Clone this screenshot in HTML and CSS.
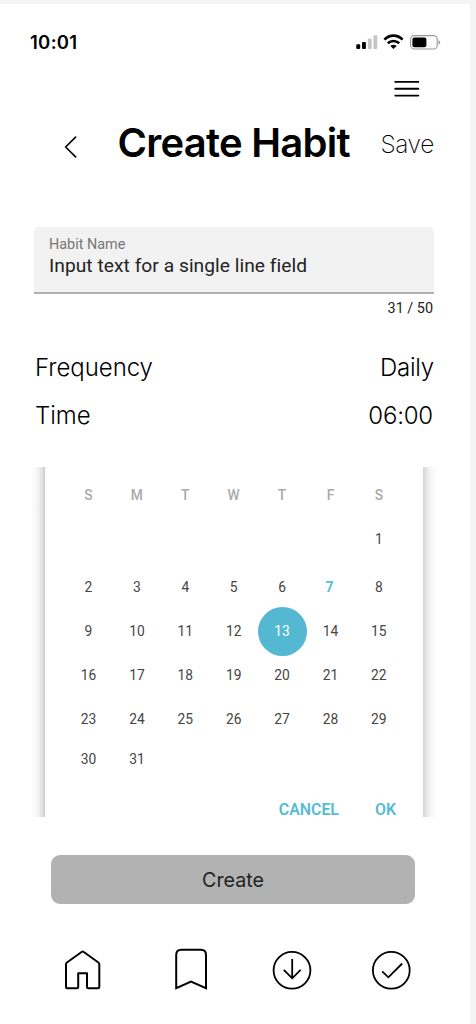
FILE: index.html
```html
<!DOCTYPE html>
<html lang="en">
<head>
<meta charset="utf-8">
<title>Create Habit</title>
<link rel="stylesheet" href="styles.css">
</head>
<body>
<main class="screen">
  <div class="status">
    <span class="clock">10:01</span>
    <svg class="status-icons" width="86" height="18" viewBox="355 33 86 18">
      <rect x="356.3" y="44.3" width="3.9" height="4.8" rx="1"/>
      <rect x="362" y="42" width="3.9" height="7.1" rx="1"/>
      <rect x="367.8" y="38.6" width="3.9" height="10.5" rx="1" fill="#c5c5c9"/>
      <rect x="373.4" y="35.3" width="3.9" height="13.8" rx="1" fill="#c5c5c9"/>
      <g fill="none" stroke="#000" stroke-width="2.7">
        <path d="M384.4 39.6C389.6 34.4 397.4 34.4 402.6 39.6"/>
        <path d="M387.8 43.3C391 40.2 396 40.2 399.2 43.3"/>
      </g>
      <path d="M390.3 46C392.1 44.2 394.9 44.2 396.7 46L393.5 49Z"/>
      <rect x="410.6" y="35.6" width="26.6" height="13.4" rx="3.6" fill="none" stroke="#999" stroke-width="1.1"/>
      <rect x="412.4" y="37.4" width="14" height="9.8" rx="2"/>
      <path d="M438.5 40.2Q440.2 40.8 440.2 42.4T438.5 44.6Z" fill="#999"/>
    </svg>
  </div>
  <div class="menu-row">
    <svg width="26" height="20" viewBox="0 0 26 20" stroke="#000" stroke-width="1.9" stroke-linecap="round"><path d="M1.3 3.9H24.3M1.3 10.8H24.3M1.3 17.6H24.3"/></svg>
  </div>
  <header class="title-row">
    <svg class="back" width="14" height="24" viewBox="0 0 14 24" fill="none" stroke="#000" stroke-width="1.7" stroke-linecap="round" stroke-linejoin="round"><path d="M12.6 2.2L2.6 12L12.6 21.8"/></svg>
    <h1 class="title">Create Habit</h1>
    <span class="save">Save</span>
  </header>
  <section class="field">
    <span class="field-label">Habit Name</span>
    <span class="field-value">Input text for a single line field</span>
  </section>
  <div class="counter">31 / 50</div>
  <div class="setting frequency"><span>Frequency</span><span class="daily">Daily</span></div>
  <div class="setting"><span>Time</span><span class="time-value">06:00</span></div>
  <section class="calendar">
    <div class="days">
      <b>S</b><b>M</b><b>T</b><b>W</b><b>T</b><b>F</b><b>S</b>
      <span class="first">1</span>
      <span>2</span><span>3</span><span>4</span><span>5</span><span>6</span><span class="today">7</span><span>8</span>
      <span>9</span><span>10</span><span>11</span><span>12</span><span class="selected">13</span><span>14</span><span>15</span>
      <span>16</span><span>17</span><span>18</span><span>19</span><span>20</span><span>21</span><span>22</span>
      <span>23</span><span>24</span><span>25</span><span>26</span><span>27</span><span>28</span><span>29</span>
      <span>30</span><span>31</span>
    </div>
    <div class="actions"><span>CANCEL</span><span>OK</span></div>
  </section>
  <button class="create">Create</button>
  <nav class="nav">
    <svg width="38" height="44" viewBox="64 948 38 44" fill="none" stroke="#000" stroke-width="2" stroke-linejoin="round"><path d="M67.2 988.2H76.7Q78.2 988.2 78.2 986.7V973.2H87V986.7Q87 988.2 88.5 988.2H98Q99.3 988.2 99.3 986.9V964.2Q99.3 963.2 98.4 962.5L83.8 952Q82.7 951.2 81.6 952L66.9 962.5Q66 963.2 66 964.2V986.9Q66 988.2 67.2 988.2Z"/></svg>
    <svg class="bookmark" width="34" height="44" viewBox="174 948 34 44" fill="none" stroke="#000" stroke-width="2"><path d="M176.2 988.2V955Q176.2 949.8 181.4 949.8H200.8Q206 949.8 206 955V988.2L191 981.5Z"/></svg>
    <svg class="download" width="40" height="44" viewBox="272 948 40 44" fill="none" stroke="#000" stroke-width="1.8"><circle cx="292" cy="970.3" r="18.4"/><path d="M292.2 959V978.5M283.8 969.8L292.2 978.3L300.6 969.8"/></svg>
    <svg class="done" width="40" height="44" viewBox="371 948 40 44" fill="none" stroke="#000" stroke-width="1.8"><circle cx="391.3" cy="970.3" r="18.4"/><path d="M382.2 971.3L388.4 977.3L402.2 963.5"/></svg>
  </nav>
</main>
</body>
</html>
```
FILE: styles.css
```css
* { box-sizing: border-box; }
body { margin: 0; background: #f4f4f4; font-family: Inter, sans-serif; color: #000; }
.screen { width: 470px; height: 1020px; margin-top: 4px; background: #fff; overflow: hidden; display: flex; flex-direction: column; }
.status { height: 53px; padding: 23px 35px 0 30px; display: flex; justify-content: space-between; }
.clock { font-size: 18.5px; font-weight: 600; line-height: 30px; letter-spacing: .3px; }
.status-icons { margin: 6px -6px 0 0; }
.menu-row { height: 63px; padding: 21px 50px 0 0; display: flex; justify-content: flex-end; }
.title-row { height: 107px; padding: 0 36px 0 63px; display: flex; align-items: flex-start; }
.back { margin-top: 15px; }
.title { margin: 0 0 0 40.5px; font-size: 40px; font-weight: 600; line-height: 46px; letter-spacing: -.75px; white-space: nowrap; }
.save { margin: 8px 0 0 auto; font-size: 24.4px; font-weight: 200; line-height: 32px; letter-spacing: -.3px; }
.field { height: 67px; margin: 0 36px 0 34px; padding: 8px 15px 0; display: flex; flex-direction: column; background: #f2f2f2; border-bottom: 2px solid #b0b0b0; border-radius: 5px 5px 0 0; font-family: Roboto, sans-serif; }
.field-label { font-size: 14.4px; line-height: 20px; color: #777; }
.field-value { font-size: 19.2px; line-height: 21px; letter-spacing: .04px; color: #222; }
.counter { height: 48px; padding: 6px 37px 0 0; text-align: right; font: 14.4px/17px Roboto, sans-serif; color: #222; }
.setting { height: 48.5px; padding: 9px 36px 0 35px; display: flex; justify-content: space-between; font-size: 24px; font-weight: 300; line-height: 32px; letter-spacing: -.05px; }
.frequency { padding-top: 10px; }
.daily { letter-spacing: -.2px; }
.time-value { margin-right: 1px; letter-spacing: -.2px; }
.calendar { flex: none; height: 350px; margin: 28px 32px 0 30px; padding: 6px 15px 0 34.3px; font-family: Roboto, sans-serif; background: linear-gradient(to left, #ccc, #e2e2e2 3px, #f3f3f3 7px, #fff 14px) left / 15px 100% no-repeat, linear-gradient(to right, #d4d4d4, #e2e2e2 3px, #f4f4f4 7px, #fff 14px) right / 15px 100% no-repeat; }
.days { display: grid; grid-template-columns: repeat(7, 48.4px); grid-template-rows: 43px 45px 51px 38px 50px 38px 41px; font-size: 13.8px; text-align: center; align-items: center; justify-items: center; color: #444; }
.days b { font-weight: 500; color: #aaa; }
.first { grid-column: 7; }
.today { color: #55c0d8; font-weight: 700; margin-right: 2px; }
.selected { width: 49px; height: 49px; line-height: 49px; border-radius: 50%; background: #55b8d2; color: #fff; }
.actions { display: flex; justify-content: flex-end; gap: 36px; padding: 23px 27px 0 0; font-size: 15.9px; line-height: 15px; font-weight: 600; color: #55bbd5; }
.create { flex: none; width: 364px; height: 49px; margin: 38px 0 0 51px; padding: 2px 0 0; border: 0; border-radius: 9px; background: #b2b2b2; font: 400 19.7px/47px Inter, sans-serif; color: #222; }
.nav { display: flex; margin: 44px 0 0 64px; }
.bookmark { margin-left: 72px; }
.download { margin-left: 64px; }
.done { margin-left: 59px; }
```
